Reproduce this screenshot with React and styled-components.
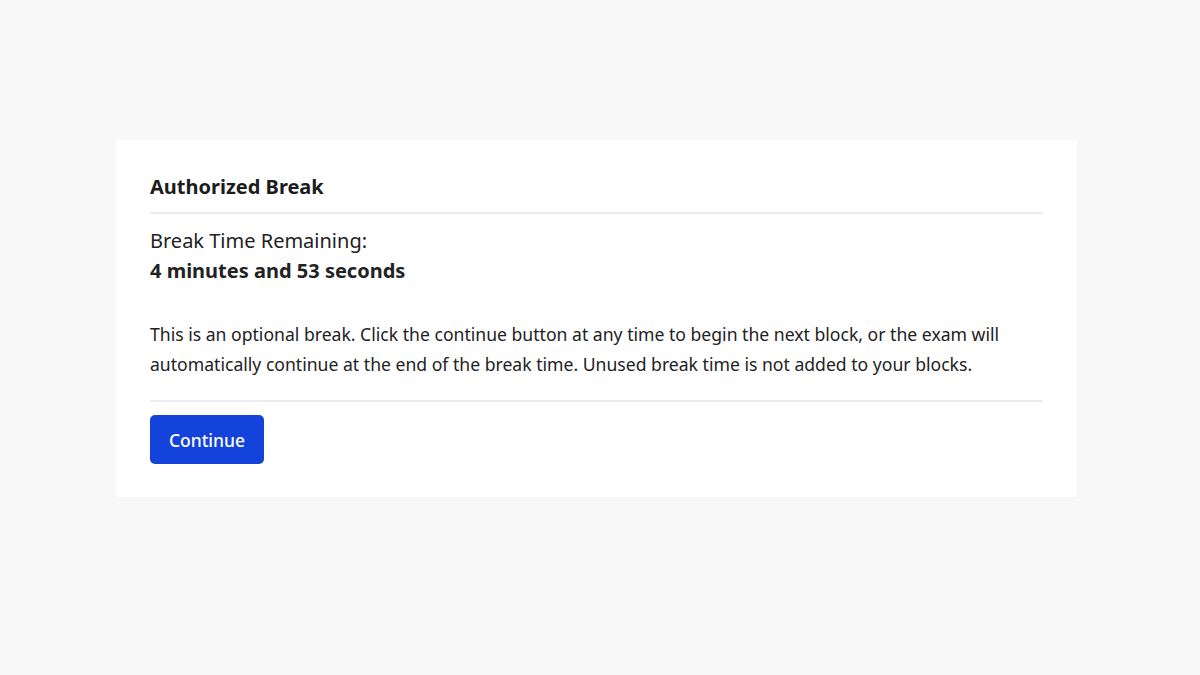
import React from 'react'
import styled, { createGlobalStyle } from 'styled-components'

const GlobalStyle = createGlobalStyle`
  html, body {
    margin: 0;
    padding: 0;
    background: #f8f8f8;
  }
  body {
    font-family: 'Noto Sans', 'Liberation Sans', sans-serif;
    color: #222;
  }
`

const Page = styled.div`
  width: 1200px;
  height: 675px;
  padding-top: 140px;
  padding-left: 116px;
  box-sizing: border-box;
`

const Card = styled.div`
  width: 961px;
  box-sizing: border-box;
  background: #fff;
  padding: 35px 34px 33px;
`

const Title = styled.h2`
  margin: 0;
  font-size: 20px;
  line-height: 24px;
  font-weight: 700;
  color: #1c1c1c;
`

const Divider = styled.hr`
  border: none;
  height: 2px;
  background: #ececec;
  margin: ${({ $top, $bottom }) => `${$top}px 0 ${$bottom}px`};
`

const Line = styled.div`
  font-size: 20px;
  line-height: 30px;
  font-weight: ${({ $bold }) => ($bold ? 700 : 400)};
  color: #222;
`

const Paragraph = styled.p`
  margin: 33px 0 0;
  font-size: 17.6px;
  line-height: 30px;
  color: #222;
`

const Button = styled.button`
  width: 114px;
  height: 49px;
  margin-top: 1px;
  border: none;
  border-radius: 5px;
  background: #1443dc;
  color: #fff;
  font-family: inherit;
  font-size: 17.5px;
  font-weight: 500;
  cursor: pointer;
`

export default function App() {
  return (
    <>
      <GlobalStyle />
      <Page>
        <Card>
          <Title>Authorized Break</Title>
          <Divider $top={13} $bottom={12} />
          <Line>Break Time Remaining:</Line>
          <Line $bold>4 minutes and 53 seconds</Line>
          <Paragraph>
            This is an optional break. Click the continue button at any time to begin the next
            block, or the exam will automatically continue at the end of the break time. Unused
            break time is not added to your blocks.
          </Paragraph>
          <Divider $top={21} $bottom={12} />
          <Button>Continue</Button>
        </Card>
      </Page>
    </>
  )
}
